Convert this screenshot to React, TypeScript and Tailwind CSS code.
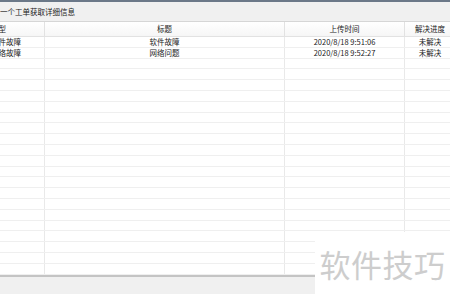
const rows = [
  { type: '软件故障', title: '软件故障', time: '2020/8/18 9:51:06', status: '未解决' },
  { type: '网络故障', title: '网络问题', time: '2020/8/18 9:52:27', status: '未解决' },
]

const emptyRows = Array.from({ length: 20 })

const Row = ({ type, title, time, status }: { type?: string; title?: string; time?: string; status?: string }) => (
  <div className="flex h-[10.8px] border-b border-[#efefef] leading-[10px]">
    <div className="w-[45px] shrink-0 overflow-hidden border-r border-[#e9e9e9] whitespace-nowrap">
      <span className="-ml-[9px] inline-block">{type}</span>
    </div>
    <div className="w-[240px] shrink-0 border-r border-[#e9e9e9] text-center">{title}</div>
    <div className="w-[120px] shrink-0 border-r border-[#e9e9e9] text-center">{time}</div>
    <div className="w-[50px] shrink-0 text-center">{status}</div>
  </div>
)

const App = () => {
  return (
    <div
      className="relative h-[294px] w-[450px] overflow-hidden bg-[#f0f0f0] text-[7.5px] text-[#1a1a1a]"
      style={{ fontFamily: '"Noto Sans CJK SC", "Liberation Sans", sans-serif' }}
    >
      <div className="h-[2px] bg-[#6b7888]" />
      <div className="flex h-[20px] items-center border-b border-[#d6d6d6] bg-[#f0f0f0]">
        <span>一个工单获取详细信息</span>
      </div>

      <div className="h-[255px] overflow-hidden border-b-2 border-[#c4c4c4] bg-white">
        <div className="flex h-[15px] items-center border-b border-[#e2e2e2] bg-gradient-to-b from-white to-[#f6f6f6]">
          <div className="flex h-full w-[45px] shrink-0 items-center overflow-hidden border-r border-[#e2e2e2] whitespace-nowrap">
            <span className="-ml-[9px]">类型</span>
          </div>
          <div className="flex h-full w-[240px] shrink-0 items-center justify-center border-r border-[#e2e2e2]">标题</div>
          <div className="flex h-full w-[120px] shrink-0 items-center justify-center border-r border-[#e2e2e2]">上传时间</div>
          <div className="flex h-full w-[50px] shrink-0 items-center justify-center">解决进度</div>
        </div>
        {rows.map((r) => (
          <Row key={r.time} {...r} />
        ))}
        {emptyRows.map((_, i) => (
          <Row key={i} />
        ))}
      </div>

      <div className="absolute bottom-0 right-0 flex h-[62px] w-[135px] items-center justify-center bg-white">
        <span className="text-[31px] leading-none tracking-[0.5px] text-[#cdcdcd]">软件技巧</span>
      </div>
    </div>
  )
}

export default App
